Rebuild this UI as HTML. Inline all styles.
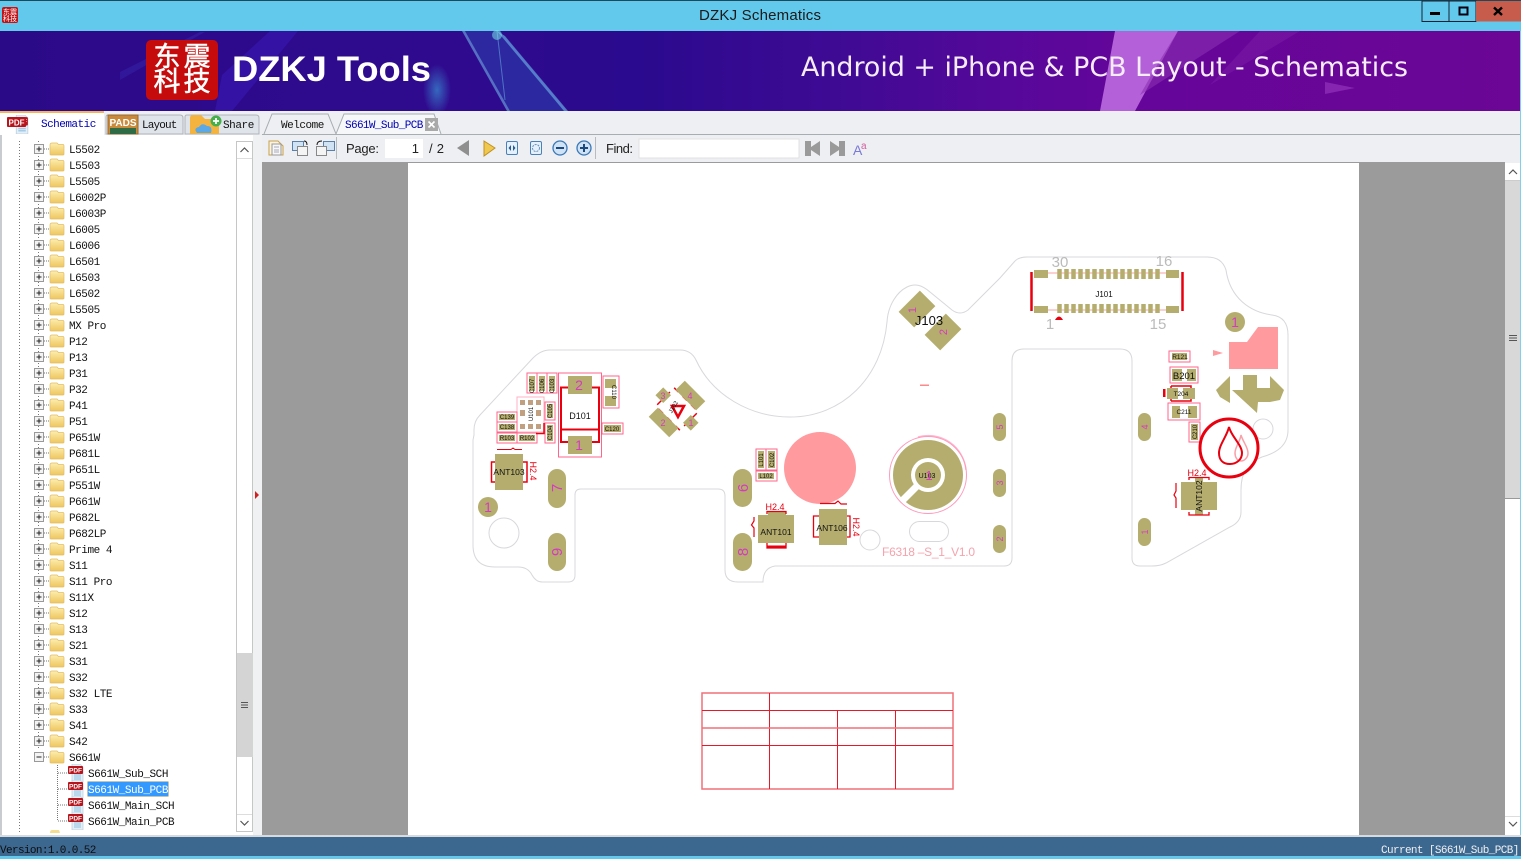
<!DOCTYPE html>
<html><head><meta charset="utf-8"><title>DZKJ Schematics</title>
<style>
html,body{margin:0;padding:0;width:1521px;height:859px;overflow:hidden;background:#eeeff2}
svg{position:absolute;left:0;top:0;display:block}
.tr text{font:11px "Liberation Mono",monospace;letter-spacing:-.45px;fill:#111}
.ui{font-family:"Liberation Sans",sans-serif}
.tb{font:11px "Liberation Mono",monospace;letter-spacing:-.3px}
.p{fill:#b5ad6e}.s{fill:none;stroke:#f36;stroke-width:1;opacity:.75}.r{fill:none;stroke:#e8000f}
.m{fill:#d63ac0;font-family:"Liberation Sans",sans-serif;text-anchor:middle}
.k{fill:#111;font-family:"Liberation Sans",sans-serif;text-anchor:middle}
.g{fill:#bbb;font-family:"Liberation Sans",sans-serif;text-anchor:middle;font-size:15px}
.h{fill:#e8000f;font:9px "Liberation Sans",sans-serif;text-anchor:middle}
</style></head><body>
<svg width="1521" height="859" viewBox="0 0 1521 859" xmlns="http://www.w3.org/2000/svg">
<defs>
<linearGradient id="bn" x1="0" x2="1" y1="0" y2="0"><stop offset="0" stop-color="#2b0a88"/><stop offset=".3" stop-color="#2f0a8e"/><stop offset=".42" stop-color="#2a0a8e"/><stop offset=".55" stop-color="#3e0a94"/><stop offset=".66" stop-color="#55089a"/><stop offset=".75" stop-color="#66059a"/><stop offset="1" stop-color="#6b0696"/></linearGradient>
<radialGradient id="glow"><stop offset="0" stop-color="#3aa6e0" stop-opacity=".6"/><stop offset="1" stop-color="#3aa6e0" stop-opacity="0"/></radialGradient>
<linearGradient id="fd" x1="0" x2="0" y1="0" y2="1"><stop offset="0" stop-color="#fdeeb0"/><stop offset="1" stop-color="#eec65e"/></linearGradient>
<symbol id="f" width="16" height="14" viewBox="0 0 16 14"><path d="M1 3Q1 1 3 1H8L9.500 2.500H14Q15 2.500 15 4V12Q15 13 14 13H2Q1 13 1 12Z" fill="url(#fd)" stroke="#e3bd62" stroke-width=".7"/></symbol>
<symbol id="e" width="10" height="10" viewBox="0 0 10 10"><rect x=".5" y=".5" width="9" height="9" fill="#f3f3f3" stroke="#999"/><path d="M2.500 5H7.500M5 2.500V7.500" stroke="#222"/></symbol>
<symbol id="d" width="17" height="18" viewBox="0 0 17 18"><path d="M4 0H12L15 3V18H4Z" fill="#e4eef6" stroke="#b8cfe0" stroke-width=".7"/><path d="M6 11H13M6 13H13M6 15H13" stroke="#8fc0e0"/><rect x="0" y="2" width="15" height="8" rx="1" fill="#b8141c"/><text x="7.500" y="8.500" font-size="6.500" font-weight="700" fill="#fff" text-anchor="middle" font-family="Liberation Sans">PDF</text></symbol>
</defs>

<!-- title bar -->
<rect width="1521" height="859" fill="#eeeff2"/>
<rect width="1521" height="31" fill="#62c9ec"/>
<rect width="1521" height="1" fill="#1c4a5c"/>
<rect x="2" y="7" width="16" height="16" rx="2" fill="#c01418"/>
<text x="10" y="14" font-size="7" fill="#fff" text-anchor="middle" font-family="Noto Sans CJK SC,sans-serif">东震</text>
<text x="10" y="21" font-size="7" fill="#fff" text-anchor="middle" font-family="Noto Sans CJK SC,sans-serif">科技</text>
<text x="760" y="20" font-size="15" fill="#1a1a1a" text-anchor="middle" class="ui" textLength="122">DZKJ Schematics</text>
<rect x="1422" y="1" width="27" height="20.500" fill="#62c9ec" stroke="#123"/>
<rect x="1449" y="1" width="27" height="20.500" fill="#62c9ec" stroke="#123"/>
<rect x="1476" y="1" width="45" height="20.500" fill="#c75c4d"/>
<rect x="1430" y="12" width="10" height="3" fill="#000"/>
<rect x="1459.500" y="7.500" width="8" height="7" fill="none" stroke="#001" stroke-width="2"/>
<path d="M1494 7.500L1502 15M1502 7.500L1494 15" stroke="#000" stroke-width="2.400"/>

<!-- banner -->
<rect x="0" y="31" width="1520" height="80" fill="url(#bn)"/>
<path d="M298 31H270L222 75L215 111H232L298 31Z" fill="#3a1ab8" opacity=".55"/>
<path d="M120 80L205 32H200L120 72Z" fill="#3a2ab0" opacity=".4"/>
<path d="M465 31H500L567 111H510Z" fill="#2a62c4" opacity=".35"/>
<path d="M465 31L510 111H507L462 31ZM497 31L505 36L568 111H564Z" fill="#77c4ee" opacity=".55"/>
<path d="M497 31L505 100" stroke="#6cc0ea" stroke-width="1" opacity=".5"/>
<circle cx="497" cy="35" r="5" fill="#7ff0f0" opacity=".5"/>
<rect x="510" y="31" width="130" height="80" fill="#1f0a90" opacity="0"/>
<ellipse cx="437" cy="90" rx="14" ry="26" fill="url(#glow)"/>
<path d="M1115 31H1178L1135 111H1100Z" fill="#c272e4" opacity=".85"/>
<path d="M1178 31H1240L1140 95L1160 60Z" fill="#8a2fb0" opacity=".6"/>
<path d="M1260 31H1300L1210 85Z" fill="#8a2fb0" opacity=".3"/>
<path d="M1325 82L1355 88L1325 94Z" fill="#9a3ac0" opacity=".6"/>
<rect x="146" y="40" width="72" height="60" rx="5" fill="#c50b0b"/>
<g font-family="Noto Sans CJK SC,sans-serif" font-size="27" fill="#fff" stroke="#fff" stroke-width=".5" text-anchor="middle">
<text x="167" y="66">东</text><text x="197" y="66">震</text><text x="167" y="91" >科</text><text x="197" y="91">技</text></g>
<text x="232" y="81" font-family="Liberation Sans,sans-serif" font-weight="700" font-size="35" fill="#fff" textLength="199" lengthAdjust="spacingAndGlyphs">DZKJ Tools</text>
<text x="801" y="76" font-family="DejaVu Sans,sans-serif" font-size="27" fill="#f4ecf8" textLength="607" lengthAdjust="spacingAndGlyphs">Android + iPhone &amp; PCB Layout - Schematics</text>

<!-- tab row -->
<rect x="0" y="111" width="1520" height="24" fill="#eeeff2"/>
<rect x="262" y="134" width="1258" height="1" fill="#a8adb2"/>
<rect x="0" y="111" width="104" height="24" fill="#fff"/>
<rect x="0" y="111" width="104" height="2" fill="#f6b45a"/>
<path d="M106 134V117Q106 115 108 115H180Q183 115 183 118V134Z" fill="#dfe3ea" stroke="#b0b4ba"/>
<path d="M185 134V117Q185 115 187 115H256Q259 115 259 118V134Z" fill="#dfe3ea" stroke="#b0b4ba"/>
<path d="M264 134L272 114H328L336 134" fill="#eeeff2" stroke="#a8adb2"/>
<path d="M336 134L344 114H434L441 134" fill="#f6f7f9" stroke="#a8adb2"/>
<use href="#d" x="8" y="115" width="26" height="19"/>
<rect x="7" y="117" width="19" height="10" rx="1" fill="#b8141c"/>
<text x="16.500" y="125.500" font-size="8" font-weight="700" fill="#fff" text-anchor="middle" class="ui">PDF</text>
<rect x="108" y="115" width="30" height="19" fill="#c98a3c" stroke="#9a6a2c"/>
<rect x="110" y="128" width="26" height="6" fill="#2f6b45"/>
<text x="123" y="126" font-size="10" font-weight="700" fill="#fff" text-anchor="middle" class="ui">PADS</text>
<path d="M190 134V118Q190 115 193 115H201L205 119H219V134Z" fill="#f4b33e"/>
<path d="M197 133Q193 128 199 127Q202 122 207 126Q213 126 211 133Z" fill="#5aa8e6"/>
<circle cx="216" cy="121" r="5.500" fill="#45b04a"/><path d="M213 121H219M216 118V124" stroke="#fff" stroke-width="1.800"/>
<g class="tb">
<text x="41" y="127" fill="#0000b0" textLength="55">Schematic</text>
<text x="142" y="128" fill="#111" textLength="35">Layout</text>
<text x="223" y="128" fill="#111" textLength="31">Share</text>
<text x="281" y="128" fill="#111" textLength="43">Welcome</text>
<text x="345" y="128" fill="#0000b0" textLength="78">S661W_Sub_PCB</text>
</g>
<rect x="425" y="118" width="13" height="13" fill="#a9a9a9"/><path d="M428.500 121.500L434.500 127.500M434.500 121.500L428.500 127.500" stroke="#fff" stroke-width="1.600"/>

<!-- left panel -->
<rect x="2" y="135" width="251" height="701" fill="#fff"/>
<rect x="0" y="135" width="2" height="701" fill="#c8ccd0"/>
<rect x="253" y="135" width="9" height="701" fill="#f0f1f3"/>
<path d="M255 491L259 495L255 499Z" fill="#d02020"/>
<g class="tr">
<path d="M19.500 141V832M38.500 141V749" stroke="#777" stroke-dasharray="1 2" fill="none"/>
<path d="M57.500 765V821M58 773H67M58 789H67M58 805H67M58 821H67M44 149H50M44 165H50M44 181H50M44 197H50M44 213H50M44 229H50M44 245H50M44 261H50M44 277H50M44 293H50M44 309H50M44 325H50M44 341H50M44 357H50M44 373H50M44 389H50M44 405H50M44 421H50M44 437H50M44 453H50M44 469H50M44 485H50M44 501H50M44 517H50M44 533H50M44 549H50M44 565H50M44 581H50M44 597H50M44 613H50M44 629H50M44 645H50M44 661H50M44 677H50M44 693H50M44 709H50M44 725H50M44 741H50M44 757H50" stroke="#777" stroke-dasharray="1 1" fill="none"/>
<use href="#e" x="34" y="144"/><use href="#f" x="49" y="142"/><text x="69" y="153">L5502</text>
<use href="#e" x="34" y="160"/><use href="#f" x="49" y="158"/><text x="69" y="169">L5503</text>
<use href="#e" x="34" y="176"/><use href="#f" x="49" y="174"/><text x="69" y="185">L5505</text>
<use href="#e" x="34" y="192"/><use href="#f" x="49" y="190"/><text x="69" y="201">L6002P</text>
<use href="#e" x="34" y="208"/><use href="#f" x="49" y="206"/><text x="69" y="217">L6003P</text>
<use href="#e" x="34" y="224"/><use href="#f" x="49" y="222"/><text x="69" y="233">L6005</text>
<use href="#e" x="34" y="240"/><use href="#f" x="49" y="238"/><text x="69" y="249">L6006</text>
<use href="#e" x="34" y="256"/><use href="#f" x="49" y="254"/><text x="69" y="265">L6501</text>
<use href="#e" x="34" y="272"/><use href="#f" x="49" y="270"/><text x="69" y="281">L6503</text>
<use href="#e" x="34" y="288"/><use href="#f" x="49" y="286"/><text x="69" y="297">L6502</text>
<use href="#e" x="34" y="304"/><use href="#f" x="49" y="302"/><text x="69" y="313">L5505</text>
<use href="#e" x="34" y="320"/><use href="#f" x="49" y="318"/><text x="69" y="329">MX Pro</text>
<use href="#e" x="34" y="336"/><use href="#f" x="49" y="334"/><text x="69" y="345">P12</text>
<use href="#e" x="34" y="352"/><use href="#f" x="49" y="350"/><text x="69" y="361">P13</text>
<use href="#e" x="34" y="368"/><use href="#f" x="49" y="366"/><text x="69" y="377">P31</text>
<use href="#e" x="34" y="384"/><use href="#f" x="49" y="382"/><text x="69" y="393">P32</text>
<use href="#e" x="34" y="400"/><use href="#f" x="49" y="398"/><text x="69" y="409">P41</text>
<use href="#e" x="34" y="416"/><use href="#f" x="49" y="414"/><text x="69" y="425">P51</text>
<use href="#e" x="34" y="432"/><use href="#f" x="49" y="430"/><text x="69" y="441">P651W</text>
<use href="#e" x="34" y="448"/><use href="#f" x="49" y="446"/><text x="69" y="457">P681L</text>
<use href="#e" x="34" y="464"/><use href="#f" x="49" y="462"/><text x="69" y="473">P651L</text>
<use href="#e" x="34" y="480"/><use href="#f" x="49" y="478"/><text x="69" y="489">P551W</text>
<use href="#e" x="34" y="496"/><use href="#f" x="49" y="494"/><text x="69" y="505">P661W</text>
<use href="#e" x="34" y="512"/><use href="#f" x="49" y="510"/><text x="69" y="521">P682L</text>
<use href="#e" x="34" y="528"/><use href="#f" x="49" y="526"/><text x="69" y="537">P682LP</text>
<use href="#e" x="34" y="544"/><use href="#f" x="49" y="542"/><text x="69" y="553">Prime 4</text>
<use href="#e" x="34" y="560"/><use href="#f" x="49" y="558"/><text x="69" y="569">S11</text>
<use href="#e" x="34" y="576"/><use href="#f" x="49" y="574"/><text x="69" y="585">S11 Pro</text>
<use href="#e" x="34" y="592"/><use href="#f" x="49" y="590"/><text x="69" y="601">S11X</text>
<use href="#e" x="34" y="608"/><use href="#f" x="49" y="606"/><text x="69" y="617">S12</text>
<use href="#e" x="34" y="624"/><use href="#f" x="49" y="622"/><text x="69" y="633">S13</text>
<use href="#e" x="34" y="640"/><use href="#f" x="49" y="638"/><text x="69" y="649">S21</text>
<use href="#e" x="34" y="656"/><use href="#f" x="49" y="654"/><text x="69" y="665">S31</text>
<use href="#e" x="34" y="672"/><use href="#f" x="49" y="670"/><text x="69" y="681">S32</text>
<use href="#e" x="34" y="688"/><use href="#f" x="49" y="686"/><text x="69" y="697">S32 LTE</text>
<use href="#e" x="34" y="704"/><use href="#f" x="49" y="702"/><text x="69" y="713">S33</text>
<use href="#e" x="34" y="720"/><use href="#f" x="49" y="718"/><text x="69" y="729">S41</text>
<use href="#e" x="34" y="736"/><use href="#f" x="49" y="734"/><text x="69" y="745">S42</text>
<rect x="34.500" y="752.500" width="9" height="9" fill="#f3f3f3" stroke="#999"/><path d="M36.500 757H41.500" stroke="#222"/>
<use href="#f" x="49" y="750"/><text x="69" y="761">S661W</text>
<use href="#d" x="68" y="764"/><text x="88" y="777">S661W_Sub_SCH</text>
<use href="#d" x="68" y="780"/>
<rect x="87.500" y="781.500" width="81" height="15" fill="#3399ff" stroke="#e8c060" stroke-dasharray="1 1"/>
<text x="88" y="793" style="fill:#fff">S661W_Sub_PCB</text>
<use href="#d" x="68" y="796"/><text x="88" y="809">S661W_Main_SCH</text>
<use href="#d" x="68" y="812"/><text x="88" y="825">S661W_Main_PCB</text>
<path d="M50 833Q50 830 52 830H59L60 833Z" fill="#f4dc90"/>
</g>
<!-- tree scrollbar -->
<rect x="236.500" y="141.500" width="16" height="690" fill="#fff" stroke="#c6c6c6"/>
<rect x="237" y="653" width="16" height="104" fill="#d4d4d4"/>
<path d="M241 702.500H248M241 705H248M241 707.500H248" stroke="#555"/>
<path d="M240.500 152L244.500 148L248.500 152M240.500 821L244.500 825L248.500 821" fill="none" stroke="#555" stroke-width="1.200"/>
<rect x="237" y="158" width="15" height="1" fill="#ddd"/><rect x="237" y="814" width="15" height="1" fill="#ddd"/>

<!-- toolbar -->
<rect x="262" y="135" width="1258" height="27" fill="#eeeff2"/>
<g stroke-width="1">
<path d="M269 141H278L283 146V155H269Z" fill="#fdf3dc" stroke="#c8a050"/><path d="M272 144H281V155H272Z" fill="#f7f7f7" stroke="#999"/><path d="M274 147H279M274 150H279M274 152H279" stroke="#aab"/>
<rect x="292.500" y="141.500" width="11" height="9" fill="#cfe3f5" stroke="#5a80a8"/><rect x="297.500" y="146.500" width="10" height="9" fill="#f4f4f4" stroke="#888"/><path d="M304 141Q307 141 307 145" fill="none" stroke="#111"/>
<rect x="323.500" y="141.500" width="11" height="9" fill="#cfe3f5" stroke="#5a80a8"/><rect x="316.500" y="146.500" width="10" height="9" fill="#f4f4f4" stroke="#888"/><path d="M322 141Q317 141 317 145" fill="none" stroke="#111"/>
</g>
<rect x="336" y="137" width="1" height="22" fill="#b8bcc0"/>
<text x="346" y="153" font-size="13" fill="#222" class="ui" textLength="33">Page:</text>
<rect x="385" y="139" width="38" height="19" fill="#fff"/>
<text x="419" y="153" font-size="13" fill="#222" text-anchor="end" class="ui">1</text>
<text x="429" y="153" font-size="13" fill="#222" class="ui" textLength="15">/ 2</text>
<path d="M469 140V156L457 148Z" fill="#8f8f8f"/>
<path d="M484 141L495 148L484 156Z" fill="#f0c850" stroke="#c09020"/>
<rect x="506.500" y="141.500" width="11" height="13" rx="1.500" fill="#e4f0fb" stroke="#4a80b8"/><path d="M511 145L508.500 148L511 151ZM513 145L515.500 148L513 151Z" fill="#2a5a90"/>
<rect x="530.500" y="141.500" width="11" height="13" rx="1.500" fill="#e4f0fb" stroke="#4a80b8"/><circle cx="536" cy="148" r="3.500" fill="none" stroke="#6a90b8" stroke-dasharray="2 1"/>
<circle cx="560" cy="148" r="7" fill="#cfe3f5" stroke="#3a78b8" stroke-width="1.300"/><path d="M556 148H564" stroke="#1a4a80" stroke-width="2"/>
<circle cx="584" cy="148" r="7" fill="#cfe3f5" stroke="#3a78b8" stroke-width="1.300"/><path d="M580 148H588M584 144V152" stroke="#1a4a80" stroke-width="2"/>
<rect x="595" y="137" width="1" height="22" fill="#b8bcc0"/>
<text x="606" y="153" font-size="13" fill="#222" class="ui" textLength="27">Find:</text>
<rect x="639" y="139" width="160" height="19" fill="#fff" stroke="#e2e2e2"/>
<path d="M805 141H811V147L820 141V156L811 150V156H805Z" fill="#9a9a9a"/>
<path d="M845 141H839V147L830 141V156L839 150V156H845Z" fill="#9a9a9a"/>
<text x="853" y="155" font-size="14" fill="#7a7ad8" class="ui">A</text><text x="861" y="149" font-size="10" fill="#d060a0" class="ui">a</text>

<!-- page area -->
<rect x="262" y="162" width="1243" height="673" fill="#9b9b9b"/>
<rect x="408" y="163" width="951" height="672" fill="#fff"/>
<rect x="1505" y="163" width="15" height="672" fill="#fff"/>
<rect x="1505" y="180" width="15" height="318" fill="#d8d8d8"/>
<rect x="1505" y="498" width="15" height="1" fill="#999"/>
<rect x="1505" y="180" width="15" height="1" fill="#ccc"/>
<rect x="1505" y="816" width="15" height="1" fill="#ddd"/>
<path d="M1509 174L1513 170L1517 174M1509 822L1513 826L1517 822" fill="none" stroke="#555" stroke-width="1.200"/>
<path d="M1509 335.500H1517M1509 338H1517M1509 340.500H1517" stroke="#555"/>
<rect x="1520" y="31" width="1" height="806" fill="#7fd0ee"/>

<!-- PCB outline -->
<path d="M474 435V430Q474 421 480 415L533 358Q541 350 550 350H680Q691 350 696 360C712 395 750 417 790 417C842 417 882 378 887 322C888 305 897 292 907 287C915 283 922 285 930 292L952 310Q960 316 968 310L1000 278L1015 261Q1019 257 1027 257H1207Q1222 257 1226 270C1230 298 1250 312 1272 315Q1288 317 1288 335V430C1288 446 1276 453 1262 457C1248 462 1241 472 1241 490V512Q1241 522 1230 527L1166 563Q1160 566 1152 566H1140Q1132 566 1132 558V361Q1132 349 1120 349H1024Q1012 349 1012 361V558Q1012 566 1004 566H775Q763 568 763 582H738Q725 582 725 570V496Q725 489 718 489H581Q575 489 575 495V575Q575 582 568 582H542Q536 582 532 575Q528 567 518 567H495Q473 567 473 545V440Z" fill="#fff" stroke="#d8d8dc" stroke-width="1"/>
<circle cx="504" cy="533" r="15" fill="#fff" stroke="#d8d8dc"/>
<circle cx="870" cy="540" r="10" fill="#fff" stroke="#d8d8dc"/>
<circle cx="1263" cy="429" r="10" fill="#fff" stroke="#d8d8dc"/>
<rect x="909.500" y="521.500" width="39" height="20" rx="10" fill="#fff" stroke="#d8d8dc"/>

<!-- pills -->
<g class="p">
<rect x="548" y="469" width="18" height="39" rx="9"/><rect x="548" y="533" width="18" height="38" rx="9"/>
<rect x="733" y="469" width="19" height="38" rx="9.500"/><rect x="733" y="533" width="19" height="38" rx="9.500"/>
<rect x="993" y="413" width="13" height="28" rx="6.500"/><rect x="993" y="469" width="13" height="28" rx="6.500"/><rect x="993" y="525" width="13" height="28" rx="6.500"/>
<rect x="1138" y="413" width="13" height="28" rx="6.500"/><rect x="1138" y="518" width="13" height="28" rx="6.500"/>
<circle cx="488" cy="507" r="10"/><circle cx="1235" cy="322" r="10"/>
</g>
<g class="m" font-size="15">
<text transform="translate(562,488) rotate(-90)">7</text>
<text transform="translate(562,552) rotate(-90)">9</text>
<text transform="translate(748,488) rotate(-90)">6</text>
<text transform="translate(748,552) rotate(-90)">8</text>
<text x="488" y="512" font-size="14">1</text>
<text x="1235" y="327" font-size="14">1</text>
</g>
<g class="m" font-size="9">
<text transform="translate(1003,427) rotate(-90)">5</text>
<text transform="translate(1003,483) rotate(-90)">3</text>
<text transform="translate(1003,539) rotate(-90)">2</text>
<text transform="translate(1148,427) rotate(-90)">4</text>
<text transform="translate(1148,532) rotate(-90)">1</text>
</g>

<!-- D101 group -->
<rect x="558.500" y="373" width="43" height="84" class="s"/>
<rect x="568" y="376" width="24" height="18" class="p"/><rect x="568" y="436" width="24" height="18" class="p"/>
<path d="M568 387.500H561V442H568M592 387.500H599V442H592M561 429.500H599" class="r" stroke-width="2"/>
<text x="579" y="390" class="m" font-size="14">2</text><text x="579" y="450" class="m" font-size="14">1</text>
<text x="580" y="419" class="k" font-size="9">D101</text>
<g class="s"><rect x="527" y="373" width="10" height="20"/><rect x="537" y="373" width="10" height="20"/><rect x="547" y="373" width="10" height="20"/>
<rect x="497" y="412" width="20" height="10"/><rect x="497" y="422" width="20" height="10"/><rect x="497" y="433" width="20" height="10"/><rect x="517" y="433" width="20" height="10"/>
<rect x="545" y="402" width="10" height="18"/><rect x="545" y="423" width="10" height="20"/>
<rect x="603" y="376" width="16" height="32"/><rect x="602" y="423" width="21" height="11"/>
<rect x="517" y="397" width="27" height="35" opacity=".5"/></g>
<g class="p">
<rect x="529" y="376" width="6" height="15"/><rect x="539" y="376" width="6" height="15"/><rect x="549" y="376" width="6" height="15"/>
<rect x="499" y="414" width="16" height="6"/><rect x="499" y="424" width="16" height="6"/><rect x="499" y="435" width="16" height="6"/><rect x="519" y="435" width="16" height="6"/>
<rect x="547" y="404" width="6" height="14"/><rect x="547" y="425" width="6" height="16"/>
<rect x="605" y="379" width="11" height="9"/><rect x="605" y="396" width="11" height="10"/><rect x="604" y="425" width="17" height="7"/>
</g>
<g fill="#c0a080">
<rect x="520" y="400" width="5" height="5"/><rect x="528" y="400" width="5" height="5"/><rect x="536" y="400" width="5" height="5"/>
<rect x="520" y="410" width="5" height="6"/><rect x="536" y="410" width="5" height="6"/>
<rect x="520" y="424" width="5" height="5"/><rect x="528" y="424" width="5" height="5"/><rect x="536" y="424" width="5" height="5"/>
</g>
<g class="k" font-size="6">
<text transform="translate(534,386) rotate(-90)">C107</text><text transform="translate(544,386) rotate(-90)">C106</text><text transform="translate(554,386) rotate(-90)">C103</text>
<text x="507" y="419">C139</text><text x="507" y="429">C138</text><text x="507" y="440">R103</text><text x="527" y="440">R102</text>
<text transform="translate(552,411) rotate(-90)">C105</text><text transform="translate(552,433) rotate(-90)">C104</text>
<text transform="translate(612,392) rotate(90)">C110</text><text x="612" y="431">C120</text>
<text transform="translate(533,414) rotate(-90)">U101</text>
</g>
<path d="M536 433.500H544V423" class="r" stroke-width="1.500"/>

<!-- ANT103 -->
<rect x="495" y="454" width="28" height="36" class="p"/>
<path d="M495 462H491.500V482H495M523 462H527V482H523" class="r" stroke-width="1.500"/>
<path d="M497 449.500H511L513 448L515 449.500H522" class="r"/>
<text x="509" y="475" class="k" font-size="8.500">ANT103</text>
<text transform="translate(530,471) rotate(90)" class="h" font-size="9">H2.4</text>

<!-- J102 -->
<g transform="translate(677,409) rotate(45)">
<rect x="-17" y="-13" width="34" height="26" fill="none" stroke="#e8000f" stroke-width="1.500" stroke-dasharray="6 6"/>
<rect x="-14.500" y="-25.500" width="29" height="13" class="p"/>
<rect x="-14.500" y="12.500" width="29" height="13" class="p"/>
<rect x="-25" y="-5.500" width="11" height="11" class="p"/>
<rect x="14" y="-5.500" width="11" height="11" class="p"/>
</g>
<path d="M672 406L684 406L678 417Z" fill="#fff" stroke="#e8000f" stroke-width="2.500"/>
<text transform="translate(675,408) rotate(-60)" class="k" font-size="6">J102</text>
<g class="m" font-size="9"><text x="690" y="399">4</text><text x="663" y="426">2</text><text x="663" y="399">3</text><text x="691" y="426">1</text></g>

<!-- J103 -->
<g class="p"><rect x="-15" y="-11" width="30" height="22" transform="translate(917,309) rotate(-45)"/><rect x="-15" y="-11" width="30" height="22" transform="translate(943,332) rotate(-45)"/></g>
<text transform="translate(916,310) rotate(-90)" class="m" font-size="11">1</text>
<text transform="translate(947,332) rotate(-90)" class="m" font-size="11">2</text>
<text x="929" y="325" class="k" font-size="13">J103</text>
<rect x="920" y="384.500" width="9" height="1.500" fill="#f88"/>

<circle cx="820" cy="468" r="36" fill="#ff9a9e"/>
<!-- U103 -->
<circle cx="928" cy="475" r="38.500" fill="none" stroke="#f9b" stroke-width="1"/>
<path d="M918 437A38 38 0 0 1 966 470" fill="none" stroke="#f9b" stroke-width="1.500" opacity=".7"/>
<circle cx="928" cy="475" r="35" class="p"/>
<path d="M928 475L902 501" stroke="#fff" stroke-width="7"/>
<circle cx="928" cy="475" r="17" fill="#fff"/><circle cx="928" cy="475" r="13" class="p"/>
<text x="927" y="478" class="k" font-size="7">U103</text>
<text x="929" y="480" class="m" font-size="13">1</text>

<!-- L101 group -->
<g class="s"><rect x="756" y="449" width="10" height="21"/><rect x="766" y="449" width="11" height="21"/><rect x="756" y="471" width="21" height="10"/></g>
<g class="p"><rect x="758" y="451" width="6" height="17"/><rect x="768" y="451" width="7" height="17"/><rect x="758" y="473" width="16" height="6"/></g>
<g class="k" font-size="6"><text transform="translate(763,460) rotate(-90)">L101</text><text transform="translate(774,460) rotate(-90)">C102</text><text x="766" y="478">L102</text></g>

<!-- ANT101 -->
<rect x="758" y="515" width="36" height="28" class="p"/><rect x="768" y="512" width="18" height="3" class="p"/>
<path d="M767 514V511.500H786V514M767 543V548H786V543" class="r" stroke-width="1.300"/>
<path d="M767 546.500H786" class="r" stroke-width="2"/>
<path d="M754 517V521L751.500 525L754 528V537" class="r" stroke-width="1.200"/>
<text x="776" y="535" class="k" font-size="8.500">ANT101</text>
<text x="775" y="510" class="h" font-size="9">H2.4</text>
<!-- ANT106 -->
<rect x="819" y="509" width="28" height="36" class="p"/>
<path d="M819 516H813.500V537H819M847 516H850V537H847" class="r" stroke-width="1.300"/>
<path d="M820 503.500H835L838 501L841 504H847" class="r" stroke-width="1.200"/>
<text x="832" y="531" class="k" font-size="8.500">ANT106</text>
<text transform="translate(853,527) rotate(90)" class="h" font-size="9">H2.4</text>

<text x="882" y="556" font-family="Liberation Sans,sans-serif" font-size="12" fill="#f5a3ac" textLength="93">F6318 –S_1_V1.0</text>

<!-- J101 -->
<path d="M1048 273H1166M1048 310H1166" stroke="#f8a0a0"/>
<path d="M1031.500 272V311M1182.500 272V311" stroke="#e8000f" stroke-width="2.500"/>
<g class="p">
<rect x="1034" y="270" width="14" height="8"/><rect x="1166" y="270" width="13" height="8"/><rect x="1034" y="306" width="14" height="7"/><rect x="1166" y="306" width="13" height="7"/>
<path d="M1059.500 269V279M1066.500 269V279M1073.500 269V279M1080.500 269V279M1087.500 269V279M1094.500 269V279M1101.500 269V279M1108.500 269V279M1115.500 269V279M1122.500 269V279M1129.500 269V279M1136.500 269V279M1143.500 269V279M1150.500 269V279M1157.500 269V279M1059.500 304V313M1066.500 304V313M1073.500 304V313M1080.500 304V313M1087.500 304V313M1094.500 304V313M1101.500 304V313M1108.500 304V313M1115.500 304V313M1122.500 304V313M1129.500 304V313M1136.500 304V313M1143.500 304V313M1150.500 304V313M1157.500 304V313" stroke="#b5ad6e" stroke-width="4.500" fill="none"/>
</g>
<text x="1104" y="297" class="k" font-size="8">J101</text>
<g class="g"><text x="1060" y="267">30</text><text x="1164" y="266">16</text><text x="1050" y="329">1</text><text x="1158" y="329">15</text></g>
<path d="M1055 320Q1059 313 1063 320Z" fill="#e8000f"/>

<!-- right pink / arrows -->
<path d="M1229 342H1247L1258 327H1278V369H1229Z" fill="#ff9a9e"/>
<path d="M1213 350L1223 353L1213 356Z" fill="#ff9a9e"/>
<path d="M1230 376L1216 390L1220 397L1230 403Z" class="p"/>
<path d="M1243 375H1257V388H1270V376L1284 390L1280 400L1270 402H1258L1257 413L1232 390H1243Z" class="p"/>

<!-- R121 etc -->
<rect x="1169" y="351" width="21" height="11" class="s"/><rect x="1172" y="353" width="15" height="7" class="p"/>
<text x="1180" y="359" class="k" font-size="6.500">R121</text>
<rect x="1170" y="367" width="28" height="16" class="s"/>
<rect x="1172" y="369" width="10" height="12" class="p"/><rect x="1187" y="369" width="9" height="12" class="p"/>
<text x="1184" y="379" class="k" font-size="9.500">B201</text>
<rect x="1167" y="388" width="28" height="11" class="p"/><rect x="1178" y="388" width="5" height="11" fill="#fff"/>
<path d="M1171 386H1191V388M1171 386V388M1171 401H1191V399M1171 401V399" class="r" stroke-width="1.500"/>
<rect x="1163" y="389" width="2.500" height="8" fill="#e8000f"/>
<text x="1181" y="396" class="k" font-size="6.500">T204</text>
<rect x="1168" y="403" width="32" height="17" class="s" opacity=".4"/>
<rect x="1172" y="406" width="8" height="12" class="p"/><rect x="1188" y="406" width="9" height="12" class="p"/>
<text x="1184" y="414" class="k" font-size="6.500">C211</text>
<rect x="1189" y="422" width="11" height="20" class="s"/><rect x="1191" y="424" width="7" height="16" class="p"/>
<text transform="translate(1197,432) rotate(-90)" class="k" font-size="6" >C210</text>

<!-- flame -->
<circle cx="1229" cy="448" r="29" fill="#fff" stroke="#e8000f" stroke-width="3"/>
<path d="M1241 435C1243 442 1248 447 1248 453C1248 458 1244 461 1241 461C1237 461 1235 457 1235 453C1235 447 1240 442 1241 435Z" fill="none" stroke="#f9a0a8" stroke-width="1.500"/>
<path d="M1229 427C1231 436 1242 445 1242 453C1242 460 1236 464 1230 464C1223 464 1219 460 1219 453C1219 445 1227 436 1229 427Z" fill="none" stroke="#e8000f" stroke-width="2"/>

<!-- ANT102 -->
<rect x="1181" y="482" width="36" height="28" class="p"/><rect x="1195" y="478" width="8" height="37" class="p"/>
<path d="M1189 480V477.500H1209V480M1189 512V515H1209V512" class="r" stroke-width="1.300"/>
<path d="M1176 483V491L1174 495L1176 498V508" class="r" stroke-width="1.200"/>
<text transform="translate(1202,496) rotate(-90)" class="k" font-size="8.500">ANT102</text>
<text x="1197" y="476" class="h" font-size="9">H2.4</text>

<!-- title block -->
<g fill="none" stroke="#e8182a" stroke-width="1">
<rect x="702" y="693" width="251" height="96" stroke="#f07078" stroke-width="1.500"/>
<path d="M702 710.500H953M702 745.500H953M769.500 693V789M837.500 710V789M895.500 710V789"/>
<path d="M702 728H953" stroke="#f07078" stroke-width="1.500"/>
</g>

<!-- status bar -->
<rect x="0" y="835" width="1521" height="2" fill="#d8dadd"/>
<rect x="0" y="837" width="1521" height="19" fill="#3c6890"/>
<rect x="0" y="856" width="1521" height="3" fill="#62c9ec"/>
<text x="0" y="853" class="tb" fill="#0d0d0d" textLength="96">Version:1.0.0.52</text>
<text x="1381" y="853" class="tb" fill="#f0f0f0" textLength="138">Current [S661W_Sub_PCB]</text>
</svg>
</body></html>
